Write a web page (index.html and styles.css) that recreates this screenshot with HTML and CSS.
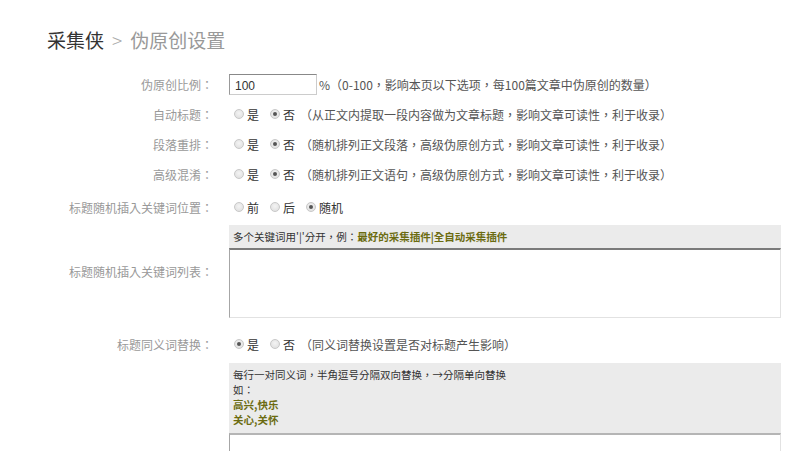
FILE: index.html
```html
<!DOCTYPE html>
<html lang="zh-TW">
<head>
<meta charset="utf-8">
<title>伪原创设置</title>
<link rel="stylesheet" href="styles.css">
</head>
<body>
<div class="page">
  <h1 class="title"><span class="crumb-main">采集侠</span><span class="crumb-sep">&gt;</span><span class="crumb-sub">伪原创设置</span></h1>
  <div class="form">
    <div class="label r1">伪原创比例：</div>
    <div class="field r1"><span class="input">100</span><span class="desc">%（0-100，影响本页以下选项，每100篇文章中伪原创的数量）</span></div>

    <div class="label r1">自动标题：</div>
    <div class="field r1"><span class="opt"><span class="radio"></span>是</span><span class="opt"><span class="radio on"></span>否</span><span class="desc">（从正文内提取一段内容做为文章标题，影响文章可读性，利于收录）</span></div>

    <div class="label r1">段落重排：</div>
    <div class="field r1"><span class="opt"><span class="radio"></span>是</span><span class="opt"><span class="radio on"></span>否</span><span class="desc">（随机排列正文段落，高级伪原创方式，影响文章可读性，利于收录）</span></div>

    <div class="label r1">高级混淆：</div>
    <div class="field r1"><span class="opt"><span class="radio"></span>是</span><span class="opt"><span class="radio on"></span>否</span><span class="desc">（随机排列正文语句，高级伪原创方式，影响文章可读性，利于收录）</span></div>

    <div class="label r5">标题随机插入关键词位置：</div>
    <div class="field r5"><span class="opt"><span class="radio"></span>前</span><span class="opt"><span class="radio"></span>后</span><span class="opt"><span class="radio on"></span>随机</span></div>

    <div class="label r6">标题随机插入关键词列表：</div>
    <div class="block r6">
      <div class="hint one">多个关键词用'|'分开，例：<b>最好的采集插件|全自动采集插件</b></div>
      <div class="area a1"></div>
    </div>

    <div class="label r7">标题同义词替换：</div>
    <div class="field r7"><span class="opt"><span class="radio on"></span>是</span><span class="opt"><span class="radio"></span>否</span><span class="desc">（同义词替换设置是否对标题产生影响）</span></div>

    <div class="label r8"></div>
    <div class="block r8">
      <div class="hint multi">每行一对同义词，半角逗号分隔双向替换，→分隔单向替换<br>如：<br><b>高兴,快乐</b><br><b>关心,关怀</b></div>
      <div class="area a2"></div>
    </div>
  </div>
</div>
</body>
</html>
```

FILE: styles.css
```css
html, body {
  margin: 0;
  padding: 0;
  background: #fff;
}
body {
  font-family: "Noto Sans CJK TC", "Noto Sans CJK SC", "Liberation Sans", sans-serif;
  font-size: 12px;
  color: #333;
  overflow: hidden;
}
.page {
  padding-top: 28px;
}
.title {
  margin: 0 0 17px 47px;
  font-size: 19px;
  line-height: 24px;
  font-weight: normal;
  display: flex;
  align-items: center;
}
.crumb-main { color: #333; }
.crumb-sep { color: #aaa; margin: 0 8px 0 8px; font-size: 19px; font-weight: 300; }
.crumb-sub { color: #999; }

.form {
  display: grid;
  grid-template-columns: 213px 552px;
  column-gap: 16px;
}
.label {
  color: #999;
  text-align: right;
  display: flex;
  align-items: center;
  justify-content: flex-end;
}
.field {
  display: flex;
  align-items: center;
  color: #555;
}
.r1 { height: 30px; }
.r5 { height: 35px; padding-top: 1px; }
.r6 { padding-bottom: 12px; }
.r7 { height: 28px; }
.r8 { padding-top: 5px; }

.input {
  box-sizing: border-box;
  width: 88px;
  height: 21px;
  border: 1px solid #ccc;
  border-top-color: #888;
  border-left-color: #999;
  padding: 3px 0 0 5px;
  font-size: 12px;
  line-height: 16px;
  color: #333;
  font-family: "Liberation Sans", sans-serif;
}
.desc {
  color: #555;
  margin-left: 2px;
}
.opt {
  display: inline-flex;
  align-items: center;
  color: #333;
  margin-right: 11px;
}
.opt:first-child { margin-left: 5px; }
.opt + .desc { margin-left: -6px; }
.radio {
  box-sizing: border-box;
  width: 10px;
  height: 10px;
  border-radius: 50%;
  border: 1px solid #c8c8c8;
  background: radial-gradient(circle at 50% 40%, #f4f4f4 0, #dcdcdc 100%);
  margin-right: 3px;
  margin-top: -1px;
  position: relative;
}
.radio.on::after {
  content: "";
  position: absolute;
  left: 2px;
  top: 2px;
  width: 4px;
  height: 4px;
  border-radius: 50%;
  background: #555;
}

.hint {
  background: #ebebeb;
  color: #333;
  font-size: 10.5px;
  padding-left: 4px;
}
.hint b {
  color: #6b6b10;
  font-weight: bold;
}
.hint.one {
  height: 23px;
  line-height: 23px;
}
.hint.multi {
  box-sizing: border-box;
  height: 70px;
  line-height: 15px;
  padding-top: 4px;
}
.area {
  box-sizing: border-box;
  background: #fff;
  border: 1px solid #e2e2e2;
  border-top: 2px solid #7a7a7a;
  border-left-color: #a6a6a6;
}
.a1 { height: 70px; }
.a2 {
  height: 40px;
  border-top-color: #b5b5b5;
}
```
